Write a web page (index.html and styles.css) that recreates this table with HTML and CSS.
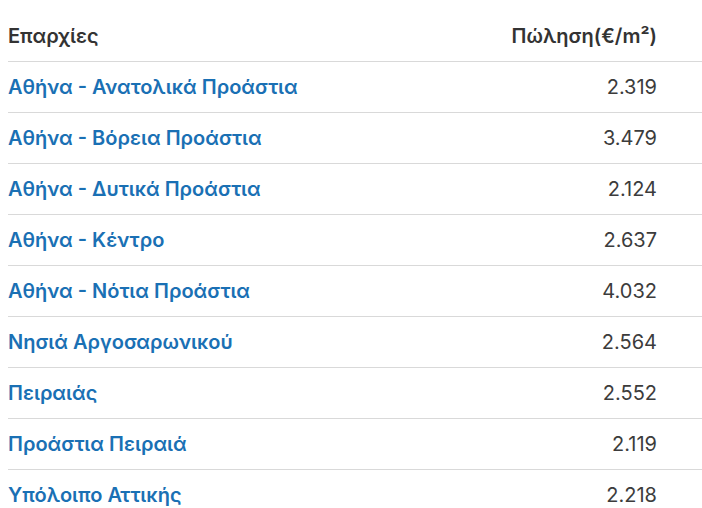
FILE: index.html
```html
<!DOCTYPE html>
<html lang="el">
<head>
<meta charset="utf-8">
<link rel="stylesheet" href="styles.css">
</head>
<body>
<table class="prices">
  <thead>
    <tr><th class="name">Επαρχίες</th><th class="val">Πώληση(€/m²)</th></tr>
  </thead>
  <tbody>
    <tr><td class="name"><a href="#">Αθήνα - Ανατολικά Προάστια</a></td><td class="val">2.319</td></tr>
    <tr><td class="name"><a href="#">Αθήνα - Βόρεια Προάστια</a></td><td class="val">3.479</td></tr>
    <tr><td class="name"><a href="#">Αθήνα - Δυτικά Προάστια</a></td><td class="val">2.124</td></tr>
    <tr><td class="name"><a href="#">Αθήνα - Κέντρο</a></td><td class="val">2.637</td></tr>
    <tr><td class="name"><a href="#">Αθήνα - Νότια Προάστια</a></td><td class="val">4.032</td></tr>
    <tr><td class="name"><a href="#">Νησιά Αργοσαρωνικού</a></td><td class="val">2.564</td></tr>
    <tr><td class="name"><a href="#">Πειραιάς</a></td><td class="val">2.552</td></tr>
    <tr><td class="name"><a href="#">Προάστια Πειραιά</a></td><td class="val">2.119</td></tr>
    <tr><td class="name"><a href="#">Υπόλοιπο Αττικής</a></td><td class="val">2.218</td></tr>
  </tbody>
</table>
</body>
</html>
```
FILE: styles.css
```css
html, body { margin: 0; padding: 0; background: #fff; }
body { padding: 12px 0 0 8px; font-family: Inter, "Noto Sans", sans-serif; font-size: 20px; color: #3c3c3c; }
.prices { border-collapse: collapse; width: 694px; }
.prices th, .prices td { padding: 12px 0; line-height: 26px; text-align: left; }
.prices th { font-weight: 600; color: #333; padding-top: 11px; }
.prices tbody tr { border-top: 1px solid #d9d9d9; }
.prices .val { text-align: right; padding-right: 45px; }
.prices td.val { color: #3c3c3c; font-weight: 400; }
.prices a { color: #1a70b4; font-weight: 600; text-decoration: none; }
```
